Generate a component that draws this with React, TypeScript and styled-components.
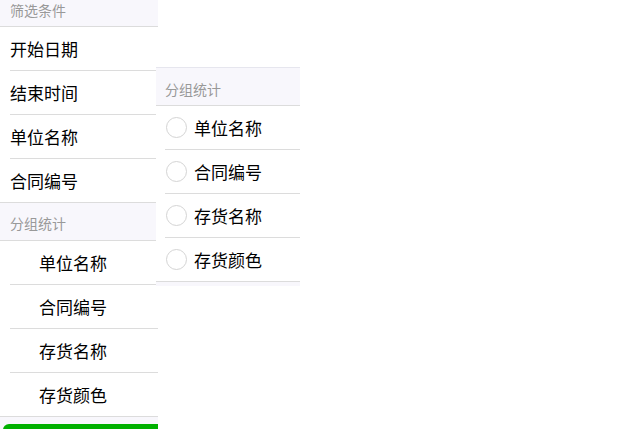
import React from "react";
import styled, { createGlobalStyle } from "styled-components";

const Global = createGlobalStyle`
  html, body { margin: 0; padding: 0; background: #fff; }
  body { font-family: "Noto Sans CJK SC", "Noto Sans", sans-serif; color: #000; }
`;

const Page = styled.div`
  position: relative;
  width: 642px;
  height: 429px;
  overflow: hidden;
`;

const Sidebar = styled.div`
  width: 158px;
  background: #f8f7fc;
  display: flex;
  flex-direction: column;
`;

const Header = styled.div<{ $h: number; $pl: number; $pb: number }>`
  height: ${(p) => p.$h}px;
  box-sizing: border-box;
  display: flex;
  align-items: flex-end;
  padding: 0 0 ${(p) => p.$pb}px ${(p) => p.$pl}px;
  font-size: 14px;
  line-height: 15px;
  color: #999;
  background: #f8f7fc;
  border-bottom: 1px solid #dcdcdc;
`;

const Group = styled.div`
  background: #fff;
  border-bottom: 1px solid #dcdcdc;
  display: flex;
  flex-direction: column;
`;

const Row = styled.div<{ $indent: number; $inset: number }>`
  height: 43px;
  display: flex;
  align-items: center;
  gap: 7px;
  padding-left: ${(p) => p.$indent}px;
  margin-left: ${(p) => p.$inset}px;
  font-size: 17px;
  color: #000;
  & + & {
    border-top: 1px solid #dcdcdc;
  }
`;

const Footer = styled.div`
  padding-top: 7px;
  padding-left: 3px;
`;

const GreenBar = styled.div`
  height: 10px;
  background: #00b000;
  border-top-left-radius: 6px;
`;

const Popup = styled.div`
  position: absolute;
  left: 156px;
  top: 67px;
  width: 144px;
  background: #f8f7fc;
  border-top: 1px solid #e6e6ee;
  padding-bottom: 4px;
`;

const Radio = styled.span`
  width: 19px;
  height: 19px;
  border-radius: 50%;
  border: 1px solid #d4d4d4;
  background: #fff;
  flex: none;
`;

const left1 = ["开始日期", "结束时间", "单位名称", "合同编号"];
const left2 = ["单位名称", "合同编号", "存货名称", "存货颜色"];

export default function App() {
  return (
    <Page>
      <Global />
      <Sidebar>
        <Header $h={27} $pl={10} $pb={8}>筛选条件</Header>
        <Group>
          {left1.map((t, i) => (
            <Row key={i} $indent={0} $inset={10}>{t}</Row>
          ))}
        </Group>
        <Header $h={38} $pl={10} $pb={9}>分组统计</Header>
        <Group>
          {left2.map((t, i) => (
            <Row key={i} $indent={29} $inset={10}>{t}</Row>
          ))}
        </Group>
        <Footer>
          <GreenBar />
        </Footer>
      </Sidebar>
      <Popup>
        <Header $h={38} $pl={9} $pb={8}>分组统计</Header>
        <Group>
          {left2.map((t, i) => (
            <Row key={i} $indent={1} $inset={9}>
              <Radio />
              {t}
            </Row>
          ))}
        </Group>
      </Popup>
    </Page>
  );
}
